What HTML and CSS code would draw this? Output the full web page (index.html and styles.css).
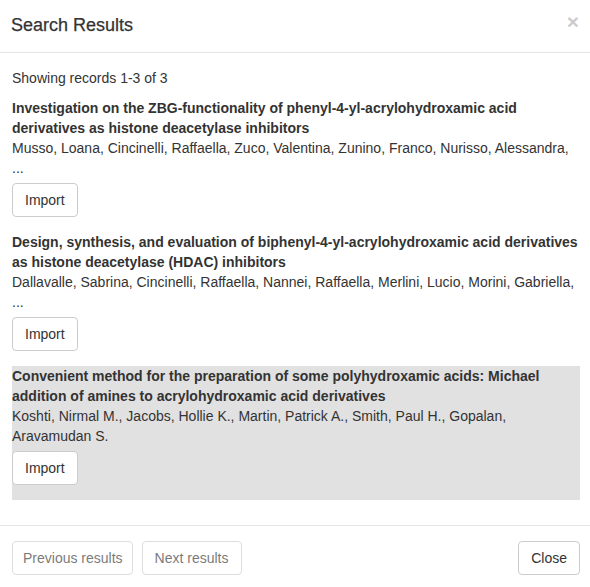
FILE: index.html
```html
<!DOCTYPE html>
<html>
<head>
<meta charset="utf-8">
<link rel="stylesheet" href="styles.css">
</head>
<body>
<div class="modal">
  <div class="modal-header">
    <h4 class="modal-title">Search Results</h4>
    <button class="close" type="button" aria-label="Close">×</button>
  </div>
  <div class="modal-body">
    <p class="summary">Showing records 1-3 of 3</p>
    <div class="record">
      <div class="record-title">Investigation on the ZBG-functionality of phenyl-4-yl-acrylohydroxamic acid derivatives as histone deacetylase inhibitors</div>
      <div class="record-authors">Musso, Loana, Cincinelli, Raffaella, Zuco, Valentina, Zunino, Franco, Nurisso, Alessandra, ...</div>
      <button class="btn" type="button">Import</button>
    </div>
    <div class="record">
      <div class="record-title">Design, synthesis, and evaluation of biphenyl-4-yl-acrylohydroxamic acid derivatives as histone deacetylase (HDAC) inhibitors</div>
      <div class="record-authors">Dallavalle, Sabrina, Cincinelli, Raffaella, Nannei, Raffaella, Merlini, Lucio, Morini, Gabriella, ...</div>
      <button class="btn" type="button">Import</button>
    </div>
    <div class="record record-active">
      <div class="record-title">Convenient method for the preparation of some polyhydroxamic acids: Michael addition of amines to acrylohydroxamic acid derivatives</div>
      <div class="record-authors">Koshti, Nirmal M., Jacobs, Hollie K., Martin, Patrick A., Smith, Paul H., Gopalan, Aravamudan S.</div>
      <button class="btn" type="button">Import</button>
    </div>
  </div>
  <div class="modal-footer">
    <div class="pager">
      <button class="btn btn-prev" type="button" disabled>Previous results</button>
      <button class="btn" type="button" disabled>Next results</button>
    </div>
    <button class="btn" type="button">Close</button>
  </div>
</div>
</body>
</html>
```

FILE: styles.css
```css
* { box-sizing: border-box; }
html, body {
  margin: 0;
  padding: 0;
  background: #fff;
}
body {
  font-family: "Liberation Sans", Arial, Helvetica, sans-serif;
  font-size: 14px;
  line-height: 20px;
  color: #333;
}
.modal {
  width: 590px;
}
.modal-header {
  display: flex;
  justify-content: space-between;
  align-items: flex-start;
  padding: 14px 11px 14px 11px;
  border-bottom: 1px solid #e5e5e5;
  height: 53px;
}
.modal-title {
  margin: 0;
  font-size: 18px;
  font-weight: 500;
  line-height: 22px;
  color: #333;
  -webkit-text-stroke: 0.25px #333;
}
.close {
  border: 0;
  background: transparent;
  padding: 0;
  margin: 1px 0 0;
  font-family: "Liberation Sans", Arial, sans-serif;
  font-size: 21px;
  font-weight: 700;
  line-height: 14px;
  color: #000;
  opacity: 0.2;
  cursor: pointer;
}
.modal-body {
  padding: 15px 10px 25px 12px;
}
.summary {
  margin: 0 0 10px;
}
.record {
  padding-bottom: 15px;
}
.record-active {
  background: #e1e1e1;
}
.record-title {
  font-weight: 700;
}
.btn {
  display: inline-block;
  margin-top: 5px;
  padding: 6px 12px;
  font-family: "Liberation Sans", Arial, sans-serif;
  font-size: 14px;
  line-height: 20px;
  color: #333;
  background: #fff;
  border: 1px solid #ccc;
  border-radius: 4px;
  height: 34px;
  cursor: pointer;
}
.btn[disabled] {
  opacity: 0.65;
  cursor: not-allowed;
}
.modal-footer {
  display: flex;
  justify-content: space-between;
  padding: 15px 10px 15px 12px;
  border-top: 1px solid #e5e5e5;
}
.modal-footer .btn {
  margin-top: 0;
}
.modal-footer .btn-prev {
  padding-left: 10px;
  padding-right: 9px;
}
.pager {
  display: flex;
  gap: 9px;
}
```
